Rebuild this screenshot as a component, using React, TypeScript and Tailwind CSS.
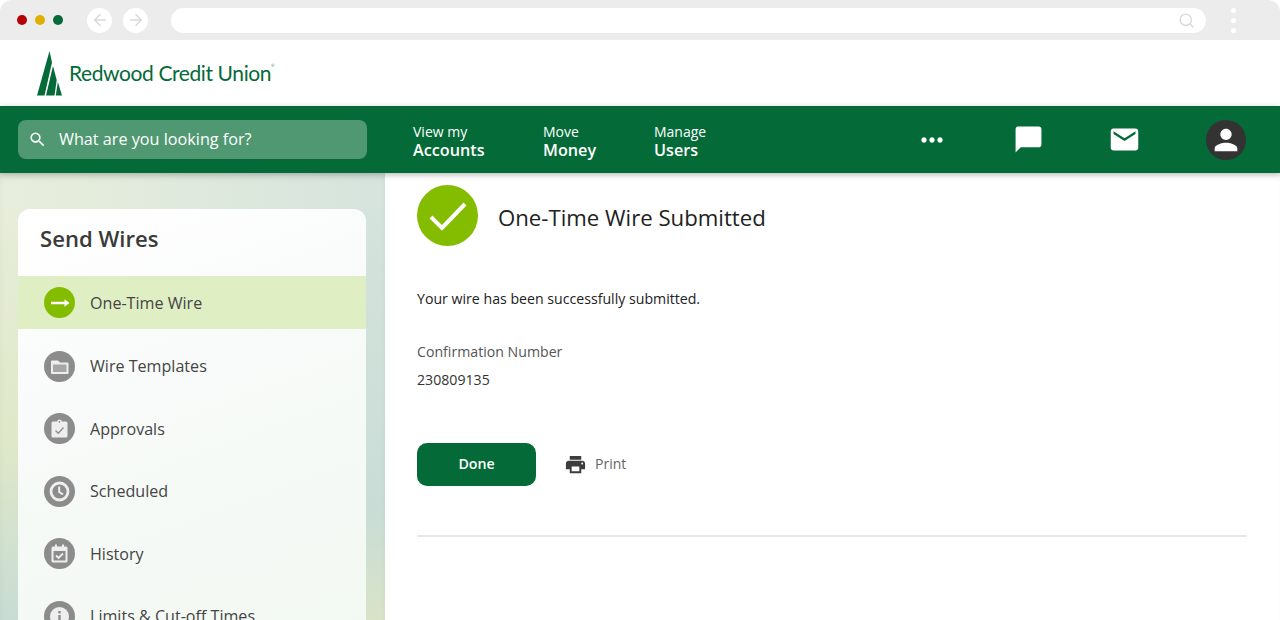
import React from 'react';
import { ArrowLeft, ArrowRight, Search } from 'lucide-react';
import {
  MdSearch,
  MdMoreHoriz,
  MdChatBubble,
  MdEmail,
  MdPerson,
  MdPrint,
} from 'react-icons/md';

const ArrowGlyph = () => (
  <svg width="20" height="10" viewBox="0 0 20 10" fill="white">
    <path d="M1 3.800h13.500V1.200L19.500 5l-5 3.800V6.200H1z" />
  </svg>
);

const FolderIcon = () => (
  <svg width="21" height="21" viewBox="0 0 21 21">
    <path d="M3 4.500h6l2 2h7.500a1 1 0 0 1 1 1V17a1 1 0 0 1-1 1H3a1 1 0 0 1-1-1V5.500a1 1 0 0 1 1-1z" fill="#eeeeee" />
    <path d="M4 8.500h13.500V16H4z" fill="#a6a6a6" />
  </svg>
);

const ClipboardIcon = () => (
  <svg width="21" height="21" viewBox="0 0 21 21">
    <path d="M4 3.500h4a2.600 2.600 0 0 1 5 0h4a1.500 1.500 0 0 1 1.500 1.500v13a1.500 1.500 0 0 1-1.500 1.500H4A1.500 1.500 0 0 1 2.500 18V5A1.500 1.500 0 0 1 4 3.500z" fill="#eeeeee" />
    <circle cx="10.500" cy="3.800" r="0.900" fill="#8c8c8c" />
    <path d="M6.500 12.500l2.800 2.800 5.200-5.800" stroke="#8c8c8c" strokeWidth="1.300" fill="none" />
  </svg>
);

const ClockIcon = () => (
  <svg width="23" height="23" viewBox="0 0 23 23" fill="none" stroke="#eeeeee">
    <circle cx="11.500" cy="11.500" r="8.500" strokeWidth="2.800" />
    <path d="M11.200 6.500v5.500l3.800 2.300" strokeWidth="2" />
  </svg>
);

const CalendarIcon = () => (
  <svg width="21" height="21" viewBox="0 0 21 21">
    <path d="M4 3.500h2V1.500h2v2h5V1.500h2v2h2a1.500 1.500 0 0 1 1.500 1.500v13a1.500 1.500 0 0 1-1.500 1.500H4A1.500 1.500 0 0 1 2.500 18V5A1.500 1.500 0 0 1 4 3.500z" fill="#eeeeee" />
    <path d="M4.500 8h12v9.500h-12z" fill="#8c8c8c" />
    <path d="M7 12.500l2.500 2.500 4.500-4.500" stroke="#eeeeee" strokeWidth="1.800" fill="none" />
  </svg>
);

const InfoIcon = () => (
  <svg width="23" height="23" viewBox="0 0 23 23">
    <circle cx="11.500" cy="11.500" r="9.500" fill="#eeeeee" />
    <rect x="10.300" y="10" width="2.400" height="7" fill="#8c8c8c" />
    <rect x="10.300" y="6" width="2.400" height="2.400" fill="#8c8c8c" />
  </svg>
);

const navItems = [
  { top: 'View my', bottom: 'Accounts', w: 'w-[130px]' },
  { top: 'Move', bottom: 'Money', w: 'w-[111px]' },
  { top: 'Manage', bottom: 'Users', w: 'w-[100px]' },
];

const sideItems = [
  { label: 'Wire Templates', icon: <FolderIcon /> },
  { label: 'Approvals', icon: <ClipboardIcon /> },
  { label: 'Scheduled', icon: <ClockIcon /> },
  { label: 'History', icon: <CalendarIcon /> },
  { label: 'Limits & Cut-off Times', icon: <InfoIcon /> },
];

const Logo = () => (
  <div className="flex items-end gap-[7px] ml-[37px] pt-[11px]">
    <svg width="26" height="45" viewBox="0 0 26 45" fill="#046a38">
      <path d="M12.500 0L15 11.500 7.500 44.500H0z" />
      <path d="M16 15L19.700 29 17.500 44.500H9z" />
      <path d="M20.800 31L25 44.500H18.800z" />
    </svg>
    <span className="font-['Lato',sans-serif] text-[21px] leading-none tracking-[-0.4px] text-[#046a38] mb-[13px] -ml-[1px]">
      Redwood Credit Union<sup className="text-[4px] align-[12px]">®</sup>
    </span>
  </div>
);

export default function App() {
  return (
    <div className="h-[620px] w-[1280px] overflow-hidden bg-white font-['Open_Sans',sans-serif] flex flex-col">
      <div className="h-10 shrink-0 bg-[#ececec] rounded-t-xl flex items-center pl-[17px] pr-[44px]">
        <div className="flex gap-2">
          <span className="w-[10px] h-[10px] rounded-full bg-[#b30000]" />
          <span className="w-[10px] h-[10px] rounded-full bg-[#e0b000]" />
          <span className="w-[10px] h-[10px] rounded-full bg-[#046a38]" />
        </div>
        <div className="flex gap-[11px] ml-6">
          <span className="w-[25px] h-[25px] rounded-full bg-white flex items-center justify-center text-[#d9d9d9]">
            <ArrowLeft size={18} />
          </span>
          <span className="w-[25px] h-[25px] rounded-full bg-white flex items-center justify-center text-[#d9d9d9]">
            <ArrowRight size={18} />
          </span>
        </div>
        <div className="ml-[23px] flex-1 h-[25px] rounded-full bg-white flex items-center justify-end pr-[11px] text-[#d9d9d9]">
          <Search size={17} />
        </div>
        <div className="ml-[25px] flex flex-col gap-[5px]">
          <span className="w-[5px] h-[5px] rounded-full bg-white" />
          <span className="w-[5px] h-[5px] rounded-full bg-white" />
          <span className="w-[5px] h-[5px] rounded-full bg-white" />
        </div>
      </div>

      <div className="h-[66px] shrink-0 bg-white">
        <Logo />
      </div>

      <div className="h-[67px] shrink-0 bg-[#046a38] flex items-center pl-[18px] text-white relative z-10 shadow-[0_1px_6px_rgba(0,0,0,0.2)]">
        <div className="w-[349px] h-[39px] rounded-lg bg-[#4f9872] flex items-center pl-[10px] gap-[12px]">
          <MdSearch size={19} />
          <span className="text-[16.200px]">What are you looking for?</span>
        </div>
        <div className="flex ml-[46px] pt-[2px]">
          {navItems.map((n) => (
            <div key={n.bottom} className={`${n.w} flex flex-col`}>
              <span className="text-[14px] leading-[19px]">{n.top}</span>
              <span className="text-[16.200px] leading-[19px] font-semibold">{n.bottom}</span>
            </div>
          ))}
        </div>
        <div className="ml-[166px] w-[24px] flex justify-center">
          <MdMoreHoriz size={32} className="shrink-0" />
        </div>
        <div className="ml-[69px]">
          <MdChatBubble size={31} />
        </div>
        <div className="ml-[64px]">
          <MdEmail size={33} />
        </div>
        <div className="ml-[65px] w-10 h-10 rounded-full bg-[#333333] flex items-center justify-center">
          <MdPerson size={34} />
        </div>
      </div>

      <div className="flex flex-1 min-h-0">
        <aside className="w-[385px] shrink-0 pl-[18px] pr-[19px] pt-9 [background:linear-gradient(to_right,#e8eedc,#d6e4dd)_top/100%_36px_no-repeat,linear-gradient(to_bottom,#e8eedc,#dfe8c8_60%,#c8dcd4)_left/50%_100%_no-repeat,linear-gradient(to_bottom,#d6e4dd,#c9ddd6_75%,#d8e3c8)_right/50%_100%_no-repeat] shadow-[inset_0_6px_8px_-4px_rgba(0,0,0,0.12)]">
          <div className="rounded-t-xl bg-[linear-gradient(160deg,#ffffff,#f8fbf9_40%,#f2f8f2)] h-[420px]">
            <h2 className="h-[67px] flex items-center pb-2 pl-[22px] text-[22.100px] font-semibold text-[#3a3a3a]">Send Wires</h2>
            <div className="h-[53px] bg-[#e0eec4] flex items-center pl-[26px] gap-[15px]">
              <span className="w-[31px] h-[31px] rounded-full bg-[#84bd00] flex items-center justify-center">
                <ArrowGlyph />
              </span>
              <span className="text-[16.100px] text-[#444444] pt-[2px]">One-Time Wire</span>
            </div>
            <div className="flex flex-col pt-[11px] gap-[10.600px]">
              {sideItems.map((item) => (
                <div key={item.label} className="h-[52px] flex items-center pl-[26px] gap-[15px]">
                  <span className="w-[31px] h-[31px] rounded-full bg-[#8c8c8c] text-[#eeeeee] flex items-center justify-center">
                    {item.icon}
                  </span>
                  <span className="text-[16.100px] text-[#444444]">{item.label}</span>
                </div>
              ))}
            </div>
          </div>
        </aside>

        <main className="flex-1 pl-[32px] pr-[33px] pt-3 shadow-[inset_0_6px_6px_-4px_rgba(0,0,0,0.12)]">
          <div className="flex items-center gap-5">
            <span className="w-[61px] h-[61px] rounded-full bg-[#84bd00] flex items-center justify-center">
              <svg width="38" height="30" viewBox="0 0 38 30" fill="none" stroke="white" strokeWidth="4">
                <path d="M2 16l11 11L36 3" />
              </svg>
            </span>
            <h1 className="text-[22.200px] text-[#222222] pt-1">One-Time Wire Submitted</h1>
          </div>
          <p className="mt-[43px] text-[14.150px] leading-[20px] text-[#222222]">Your wire has been successfully submitted.</p>
          <p className="mt-[33px] text-[14.150px] leading-[20px] text-[#555555]">Confirmation Number</p>
          <p className="mt-2 text-[14.150px] leading-[20px] text-[#333333]">230809135</p>
          <div className="mt-[53px] flex items-center">
            <button className="w-[119px] h-[43px] rounded-[10px] bg-[#046a38] text-white text-[14.200px] font-semibold pb-[2px]">Done</button>
            <MdPrint size={23} className="ml-[28px] text-[#3d3d3d]" />
            <span className="ml-[8px] text-[14px] text-[#666666] pb-[2px]">Print</span>
          </div>
          <div className="mt-[49px] h-[2px] bg-[#e8e8e8]" />
        </main>
      </div>
    </div>
  );
}
